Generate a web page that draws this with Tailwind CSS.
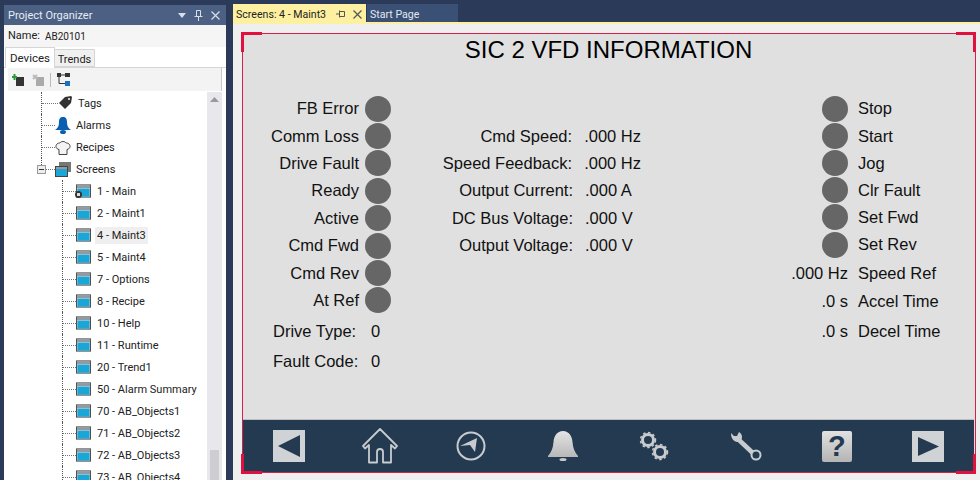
<!DOCTYPE html>
<html lang="en">
<head>
<meta charset="UTF-8">
<title>Project Organizer</title>
<script src="https://cdn.jsdelivr.net/npm/@tailwindcss/browser@4"></script>
</head>
<body class="w-[980px] h-[480px] overflow-hidden bg-[#2b3a58] flex font-['Roboto',sans-serif] text-[11px] text-[#222] whitespace-nowrap">

<svg class="hidden">
  <symbol id="scr" viewBox="0 0 16 14">
    <rect x="0.5" y="0.5" width="15" height="13" fill="#d8d8d8" stroke="#444"/>
    <rect x="1" y="1" width="14" height="3" fill="#8f9aa3"/>
    <rect x="1.5" y="4.5" width="13" height="8.5" fill="#1aa7d8"/>
  </symbol>
</svg>

<!-- Project organizer -->
<aside class="w-[222px] h-[475px] ml-[4px] mt-[5px] flex flex-col bg-white overflow-hidden">
  <div class="h-[20px] shrink-0 bg-[#4b6083] text-[#e8edf5] flex items-center pl-[4px] pr-[6px] text-[11px]">
    <span class="flex-1 translate-y-px">Project Organizer</span>
    <svg class="w-[8px] h-[5px] mr-[8px]" viewBox="0 0 8 5"><path d="M0 0h8L4 5z" fill="#d8dfe9"/></svg>
    <svg class="w-[9px] h-[11px] mr-[8px]" viewBox="0 0 9 11" fill="none" stroke="#d8dfe9"><path d="M2.5.5h4v6h-4zM.5 6.500h8M4.500 7v4"/></svg>
    <svg class="w-[9px] h-[9px]" viewBox="0 0 9 9" stroke="#d8dfe9" stroke-width="1.200"><path d="M.5.5l8 8M8.500.5l-8 8"/></svg>
  </div>
  <div class="h-[22px] shrink-0 bg-[#f5f5f5] flex items-center pl-[4px]"><span class="w-[37px]">Name:</span><span class="text-[10px]">AB20101</span></div>
  <div class="h-[21px] shrink-0 flex items-end pl-[1px] border-b border-[#d5d5d5]">
    <div class="w-[50px] h-[21px] -mb-px bg-white border border-b-0 border-[#d5d5d5] flex items-center justify-center text-[11.500px]"><span class="translate-y-px">Devices</span></div>
    <div class="w-[40px] h-[18px] bg-[#f0f0f0] border border-l-0 border-[#d5d5d5] flex items-center justify-center"><span class="translate-y-[2px]">Trends</span></div>
  </div>
  <div class="h-[23px] shrink-0 mx-[4px] bg-[#f3f3f3] border-r border-[#c8c8c8] flex items-center pl-[4px]">
    <svg class="w-[12px] h-[12px]" viewBox="0 0 12 12"><rect x="4" y="3" width="8" height="9" fill="#333"/><path d="M2.500 0v6M0 3h5" stroke="#2a9a3a" stroke-width="2"/></svg>
    <svg class="w-[12px] h-[12px] ml-[8px]" viewBox="0 0 12 12"><rect x="4" y="3" width="8" height="9" fill="#aaa"/><path d="M1 1l4 4M5 1L1 5" stroke="#bbb" stroke-width="2"/></svg>
    <span class="w-px h-[14px] bg-[#bbb] ml-[6px]"></span>
    <svg class="w-[13px] h-[13px] ml-[6px]" viewBox="0 0 13 13"><rect x="0" y="0" width="4" height="4" fill="#333"/><rect x="8" y="0" width="5" height="4" fill="#333"/><rect x="8" y="8" width="5" height="5" fill="#1d6fc0"/><path d="M2 4v6.500h6M4 2h4" stroke="#333" fill="none"/></svg>
  </div>

  <div class="flex-1 flex min-h-0 pt-px">
    <div class="flex-1 min-w-0">
      <div class="flex items-center h-[22px]">
        <span class="ml-[37px] h-full border-l border-dotted border-[#555]"></span>
        <span class="w-[16px] border-t border-dotted border-[#777]"></span>
        <svg class="w-[14px] h-[14px] mr-[6px]" viewBox="0 0 14 14"><path d="M1 7l6-6 6-1 1 1-1 6-6 6z" fill="#333"/><circle cx="11" cy="3" r="1" fill="#fff"/></svg>
        <span class="translate-y-px">Tags</span>
      </div>
      <div class="flex items-center h-[22px]">
        <span class="ml-[37px] h-full border-l border-dotted border-[#555]"></span>
        <span class="w-[13px] border-t border-dotted border-[#777]"></span>
        <svg class="w-[16px] h-[17px] mr-[5px]" viewBox="0 0 16 17"><path d="M8 0c3 0 4 2 4 5 0 4 1 6 4 8H0c3-2 4-4 4-8 0-3 1-5 4-5z" fill="#0a5fb0"/><ellipse cx="8" cy="15" rx="3" ry="2" fill="#0a5fb0"/></svg>
        <span class="translate-y-px">Alarms</span>
      </div>
      <div class="flex items-center h-[22px]">
        <span class="ml-[37px] h-full border-l border-dotted border-[#555]"></span>
        <span class="w-[13px] border-t border-dotted border-[#777]"></span>
        <svg class="w-[16px] h-[15px] mr-[5px]" viewBox="0 0 16 15" fill="#f4f4f4" stroke="#444"><path d="M4 9.500C1 9 0 6 2 4c1-1 2-1 3-1 1-2 5-2 6 0 1 0 2 0 3 1 2 2 1 5-2 5.500v5H4z"/></svg>
        <span class="translate-y-px">Recipes</span>
      </div>
      <div class="flex items-center h-[22px]">
        <span class="ml-[37px] h-full relative flex items-center">
          <span class="absolute left-0 top-0 h-1/2 border-l border-dotted border-[#555]"></span>
          <span class="absolute -left-[4px] w-[9px] h-[9px] bg-[#eee] border border-[#999] flex items-center justify-center"><span class="w-[5px] h-px bg-[#333]"></span></span>
        </span>
        <span class="ml-[5px] w-[9px] border-t border-dotted border-[#777]"></span>
        <svg class="w-[16px] h-[15px] mr-[5px]" viewBox="0 0 16 15"><rect x="4" y="0" width="12" height="10" fill="#777"/><rect x="0.500" y="4.500" width="12" height="10" fill="#1aa7d8" stroke="#444"/><rect x="1" y="5" width="11" height="2" fill="#999"/></svg>
        <span class="translate-y-px">Screens</span>
      </div>

      <div class="flex items-center h-[22px]">
        <span class="ml-[58px] h-full border-l border-dotted border-[#555]"></span>
        <span class="w-[13px] border-t border-dotted border-[#777]"></span>
        <span class="relative mr-[6px] w-[15px] h-[14px]">
          <svg class="w-[15px] h-[14px]"><use href="#scr"/></svg>
          <span class="absolute -left-[1px] bottom-0 w-[7px] h-[7px] rounded-full bg-[#333] border-2 border-[#333] flex"><span class="flex-1 bg-[#ddd]"></span></span>
        </span>
        <span class="translate-y-px">1 - Main</span>
      </div>
      <div class="flex items-center h-[22px]"><span class="ml-[58px] h-full border-l border-dotted border-[#555]"></span><span class="w-[13px] border-t border-dotted border-[#777]"></span><svg class="w-[15px] h-[14px] mr-[6px]"><use href="#scr"/></svg><span class="translate-y-px">2 - Maint1</span></div>
      <div class="flex items-center h-[22px]"><span class="ml-[58px] h-full border-l border-dotted border-[#555]"></span><span class="w-[13px] border-t border-dotted border-[#777]"></span><svg class="w-[15px] h-[14px] mr-[4px]"><use href="#scr"/></svg><span class="bg-[#efefef] px-[2px] h-[17px] leading-[18px]">4 - Maint3</span></div>
      <div class="flex items-center h-[22px]"><span class="ml-[58px] h-full border-l border-dotted border-[#555]"></span><span class="w-[13px] border-t border-dotted border-[#777]"></span><svg class="w-[15px] h-[14px] mr-[6px]"><use href="#scr"/></svg><span class="translate-y-px">5 - Maint4</span></div>
      <div class="flex items-center h-[22px]"><span class="ml-[58px] h-full border-l border-dotted border-[#555]"></span><span class="w-[13px] border-t border-dotted border-[#777]"></span><svg class="w-[15px] h-[14px] mr-[6px]"><use href="#scr"/></svg><span class="translate-y-px">7 - Options</span></div>
      <div class="flex items-center h-[22px]"><span class="ml-[58px] h-full border-l border-dotted border-[#555]"></span><span class="w-[13px] border-t border-dotted border-[#777]"></span><svg class="w-[15px] h-[14px] mr-[6px]"><use href="#scr"/></svg><span class="translate-y-px">8 - Recipe</span></div>
      <div class="flex items-center h-[22px]"><span class="ml-[58px] h-full border-l border-dotted border-[#555]"></span><span class="w-[13px] border-t border-dotted border-[#777]"></span><svg class="w-[15px] h-[14px] mr-[6px]"><use href="#scr"/></svg><span class="translate-y-px">10 - Help</span></div>
      <div class="flex items-center h-[22px]"><span class="ml-[58px] h-full border-l border-dotted border-[#555]"></span><span class="w-[13px] border-t border-dotted border-[#777]"></span><svg class="w-[15px] h-[14px] mr-[6px]"><use href="#scr"/></svg><span class="translate-y-px">11 - Runtime</span></div>
      <div class="flex items-center h-[22px]"><span class="ml-[58px] h-full border-l border-dotted border-[#555]"></span><span class="w-[13px] border-t border-dotted border-[#777]"></span><svg class="w-[15px] h-[14px] mr-[6px]"><use href="#scr"/></svg><span class="translate-y-px">20 - Trend1</span></div>
      <div class="flex items-center h-[22px]"><span class="ml-[58px] h-full border-l border-dotted border-[#555]"></span><span class="w-[13px] border-t border-dotted border-[#777]"></span><svg class="w-[15px] h-[14px] mr-[6px]"><use href="#scr"/></svg><span class="translate-y-px">50 - Alarm Summary</span></div>
      <div class="flex items-center h-[22px]"><span class="ml-[58px] h-full border-l border-dotted border-[#555]"></span><span class="w-[13px] border-t border-dotted border-[#777]"></span><svg class="w-[15px] h-[14px] mr-[6px]"><use href="#scr"/></svg><span class="translate-y-px">70 - AB_Objects1</span></div>
      <div class="flex items-center h-[22px]"><span class="ml-[58px] h-full border-l border-dotted border-[#555]"></span><span class="w-[13px] border-t border-dotted border-[#777]"></span><svg class="w-[15px] h-[14px] mr-[6px]"><use href="#scr"/></svg><span class="translate-y-px">71 - AB_Objects2</span></div>
      <div class="flex items-center h-[22px]"><span class="ml-[58px] h-full border-l border-dotted border-[#555]"></span><span class="w-[13px] border-t border-dotted border-[#777]"></span><svg class="w-[15px] h-[14px] mr-[6px]"><use href="#scr"/></svg><span class="translate-y-px">72 - AB_Objects3</span></div>
      <div class="flex items-center h-[22px]"><span class="ml-[58px] h-full border-l border-dotted border-[#555]"></span><span class="w-[13px] border-t border-dotted border-[#777]"></span><svg class="w-[15px] h-[14px] mr-[6px]"><use href="#scr"/></svg><span class="translate-y-px">73 - AB_Objects4</span></div>
    </div>
    <!-- scrollbar -->
    <div class="w-[15px] mr-[4px] bg-[#e8e8ec] flex flex-col items-center pt-[5px] justify-between">
      <svg class="w-[9px] h-[5px]" viewBox="0 0 9 5"><path d="M0 5L4.500 0 9 5z" fill="#999"/></svg>
      <div class="w-[9px] h-[30px] bg-[#cdcdd2]"></div>
    </div>
  </div>
</aside>

<!-- Document well -->
<main class="w-[747px] ml-[7px] flex flex-col">
  <div class="h-[18px] mt-[4px] shrink-0 flex text-[10.600px]">
    <div class="w-[133px] bg-[#fdf0a0] flex items-center pl-[3px] text-[#222]">
      <span class="flex-1 translate-y-[2px]">Screens: 4 - Maint3</span>
      <svg class="w-[10px] h-[8px] mr-[7px] translate-y-px" viewBox="0 0 10 8" fill="none" stroke="#555"><path d="M0 4h3M3.500 1.500h5v5h-5zM3.500 .5v7"/></svg>
      <svg class="w-[9px] h-[9px] mr-[4px] translate-y-px" viewBox="0 0 9 9" stroke="#555" stroke-width="1.200"><path d="M.5.5l8 8M8.500.5l-8 8"/></svg>
    </div>
    <div class="w-[91px] ml-px bg-[#3a5075] text-[#e4e9f2] flex items-center pl-[3px]"><span class="translate-y-[2px]">Start Page</span></div>
  </div>
  <div class="h-[2px] shrink-0 bg-[#fdf0a0]"></div>

  <div class="flex-1 bg-[#efefef] pl-[9px] pt-[9px] pr-[4px]">
    <div class="relative w-[734px] h-[440px] border border-[#d81e4a] bg-[#e0e0e0] flex flex-col font-['Liberation_Sans',sans-serif] text-[16.500px] text-[#111]">
      <!-- selection corners -->
      <span class="absolute -left-[2px] -top-[2px] w-[21px] h-[3px] bg-[#e0103f]"></span>
      <span class="absolute -left-[2px] -top-[2px] w-[3px] h-[20px] bg-[#e0103f]"></span>
      <span class="absolute -right-[1px] -top-[2px] w-[20px] h-[3px] bg-[#e0103f]"></span>
      <span class="absolute -right-[1px] -top-[2px] w-[3px] h-[20px] bg-[#e0103f]"></span>
      <span class="absolute -left-[2px] -bottom-[2px] w-[21px] h-[3px] bg-[#e0103f]"></span>
      <span class="absolute -left-[2px] -bottom-[2px] w-[3px] h-[20px] bg-[#e0103f]"></span>
      <span class="absolute -right-[1px] -bottom-[2px] w-[20px] h-[3px] bg-[#e0103f]"></span>
      <span class="absolute -right-[1px] -bottom-[2px] w-[3px] h-[20px] bg-[#e0103f]"></span>

      <h1 class="h-[30px] mt-[1px] shrink-0 text-center text-[24px] leading-[30px] text-black pr-[1px]">SIC 2 VFD INFORMATION</h1>

      <div class="flex-1 flex pt-[30px]">
        <!-- left column -->
        <div class="w-[148px] flex flex-col">
          <div class="h-[27.4px] flex items-center justify-end gap-[6px]"><span>FB Error</span><span class="w-[26px] h-[26px] rounded-full bg-[#666]"></span></div>
          <div class="h-[27.4px] flex items-center justify-end gap-[6px]"><span>Comm Loss</span><span class="w-[26px] h-[26px] rounded-full bg-[#666]"></span></div>
          <div class="h-[27.4px] flex items-center justify-end gap-[6px]"><span>Drive Fault</span><span class="w-[26px] h-[26px] rounded-full bg-[#666]"></span></div>
          <div class="h-[27.4px] flex items-center justify-end gap-[6px]"><span>Ready</span><span class="w-[26px] h-[26px] rounded-full bg-[#666]"></span></div>
          <div class="h-[27.4px] flex items-center justify-end gap-[6px]"><span>Active</span><span class="w-[26px] h-[26px] rounded-full bg-[#666]"></span></div>
          <div class="h-[27.4px] flex items-center justify-end gap-[6px]"><span>Cmd Fwd</span><span class="w-[26px] h-[26px] rounded-full bg-[#666]"></span></div>
          <div class="h-[27.4px] flex items-center justify-end gap-[6px]"><span>Cmd Rev</span><span class="w-[26px] h-[26px] rounded-full bg-[#666]"></span></div>
          <div class="h-[27.4px] flex items-center justify-end gap-[6px]"><span>At Ref</span><span class="w-[26px] h-[26px] rounded-full bg-[#666]"></span></div>
          <div class="h-[30px] mt-[2px] flex items-center pl-[30px]"><span class="w-[86px]">Drive Type:</span><span class="ml-[12px]">0</span></div>
          <div class="h-[30px] flex items-center pl-[30px]"><span class="w-[86px]">Fault Code:</span><span class="ml-[12px]">0</span></div>
        </div>

        <!-- middle column -->
        <div class="w-[250px] pt-[27.4px] flex flex-col">
          <div class="h-[27.4px] flex items-center"><span class="w-[182px] text-right">Cmd Speed:</span><span class="ml-[12px]">.000 Hz</span></div>
          <div class="h-[27.4px] flex items-center"><span class="w-[182px] text-right">Speed Feedback:</span><span class="ml-[12px]">.000 Hz</span></div>
          <div class="h-[27.4px] flex items-center"><span class="w-[182px] text-right">Output Current:</span><span class="ml-[12px]">.000 A</span></div>
          <div class="h-[27.4px] flex items-center"><span class="w-[182px] text-right">DC Bus Voltage:</span><span class="ml-[12px]">.000 V</span></div>
          <div class="h-[27.4px] flex items-center"><span class="w-[182px] text-right">Output Voltage:</span><span class="ml-[12px]">.000 V</span></div>
        </div>

        <!-- right column -->
        <div class="flex-1 flex flex-col">
          <div class="h-[27.4px] flex items-center pl-[181px] gap-[10px]"><span class="w-[26px] h-[26px] rounded-full bg-[#666]"></span><span>Stop</span></div>
          <div class="h-[27.4px] flex items-center pl-[181px] gap-[10px]"><span class="w-[26px] h-[26px] rounded-full bg-[#666]"></span><span>Start</span></div>
          <div class="h-[27px] flex items-center pl-[181px] gap-[10px]"><span class="w-[26px] h-[26px] rounded-full bg-[#666]"></span><span>Jog</span></div>
          <div class="h-[27px] flex items-center pl-[181px] gap-[10px]"><span class="w-[26px] h-[26px] rounded-full bg-[#666]"></span><span>Clr Fault</span></div>
          <div class="h-[27.4px] flex items-center pl-[181px] gap-[10px]"><span class="w-[26px] h-[26px] rounded-full bg-[#666]"></span><span>Set Fwd</span></div>
          <div class="h-[27.4px] flex items-center pl-[181px] gap-[10px]"><span class="w-[26px] h-[26px] rounded-full bg-[#666]"></span><span>Set Rev</span></div>
          <div class="h-[29px] flex items-center"><span class="w-[207px] text-right">.000 Hz</span><span class="ml-[10px]">Speed Ref</span></div>
          <div class="h-[27.4px] flex items-center"><span class="w-[207px] text-right">.0 s</span><span class="ml-[10px]">Accel Time</span></div>
          <div class="h-[32px] flex items-center"><span class="w-[207px] text-right">.0 s</span><span class="ml-[10px]">Decel Time</span></div>
        </div>
      </div>

      <!-- nav bar -->
      <nav class="h-[53px] shrink-0 bg-[#243a50] grid grid-cols-8 items-center justify-items-center border-t border-[#bdbdbd] mr-px">
        <svg class="w-[32px] h-[32px]" viewBox="0 0 32 32"><rect width="32" height="32" fill="#d0d3d6"/><path d="M5 16L27 5v22z" fill="#243a50"/></svg>
        <svg class="w-[36px] h-[36px]" viewBox="0 0 36 36" fill="none" stroke="#c8ccd0" stroke-width="1.800" stroke-linejoin="round"><path d="M18 1L1 18l2 2.500 4-3.500v17.500h8V24q0-3 3-3t3 3v10.500h8V17l4 3.500 2-2.500z"/></svg>
        <svg class="w-[30px] h-[30px]" viewBox="0 0 30 30"><circle cx="15" cy="15" r="13.500" fill="none" stroke="#c8ccd0" stroke-width="2"/><path d="M4 15L21 7l-2 14-5-7z" fill="#c8ccd0"/></svg>
        <svg class="w-[30px] h-[30px]" viewBox="0 0 30 30"><defs><linearGradient id="g" x1="0" y1="0" x2="0" y2="1"><stop offset="0" stop-color="#e4e4e4"/><stop offset="1" stop-color="#b8b8b8"/></linearGradient></defs><path d="M15 0c6 0 9 5 9.500 11 .5 6 2 10 5.500 14v1H0v-1c3.500-4 5-8 5.500-14C6 5 9 0 15 0z" fill="url(#g)"/><ellipse cx="15" cy="28.500" rx="3.500" ry="1.500" fill="#c8c8c8"/></svg>
        <svg class="w-[30px] h-[30px]" viewBox="0 0 30 30" fill="none" stroke="#c8ccd0"><circle cx="9" cy="9" r="5.500" stroke-width="3"/><circle cx="9" cy="9" r="7.500" stroke-width="1.500" stroke-dasharray="2.500 2.500"/><circle cx="21" cy="21" r="5.500" stroke-width="3"/><circle cx="21" cy="21" r="7.500" stroke-width="1.500" stroke-dasharray="2.500 2.500"/></svg>
        <svg class="w-[32px] h-[30px]" viewBox="0 0 32 30" fill="none"><path d="M9 9L25 24" stroke="#c8ccd0" stroke-width="4.500"/><path d="M1 2c0 5 2 8 6 9 3 0 5-2 5-5 0-2-1-4-3-5L7 5 4 5z" fill="#c8ccd0"/><circle cx="26" cy="24" r="4.500" fill="#243a50" stroke="#c8ccd0" stroke-width="2"/></svg>
        <div class="w-[30px] h-[31px] rounded-[2px] bg-gradient-to-b from-[#e2e2e2] to-[#b4b4b4] flex items-center justify-center font-bold text-[29px] leading-none text-[#243a50]">?</div>
        <svg class="w-[32px] h-[31px]" viewBox="0 0 32 31"><rect width="32" height="31" fill="#d0d3d6"/><path d="M27 15.500L6 6v19z" fill="#243a50"/></svg>
      </nav>
    </div>
  </div>
</main>
</body>
</html>
